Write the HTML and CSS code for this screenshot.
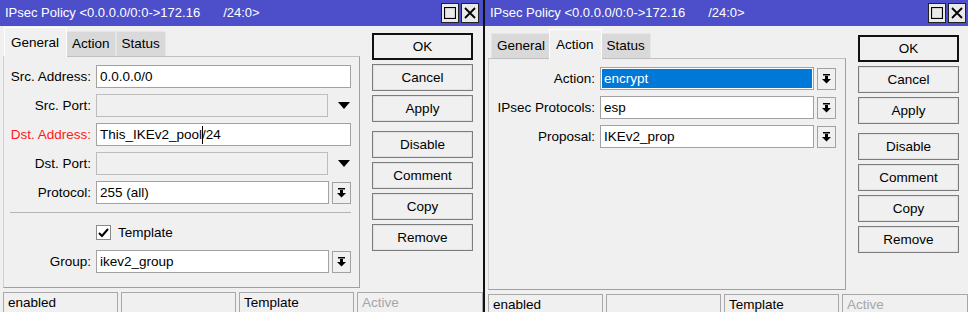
FILE: index.html
```html
<!DOCTYPE html>
<html lang="en">
<head>
  <meta charset="UTF-8" />
  <title>IPsec Policy</title>
  <link rel="stylesheet" href="styles.css">
</head>
<body>

  <div class="desk">

    <!-- window 1: General tab -->
    <div class="window">
      <div class="titlebar">
        <span class="title">IPsec Policy &lt;0.0.0.0/0:0-&gt;172.16<span class="gap"></span>/24:0&gt;</span>
        <div class="tbtns">
          <span class="tbtn"><svg width="12" height="12" viewBox="0 0 12 12"><rect x="0.5" y="0.5" width="11" height="11" fill="none" stroke="#000" stroke-width="1.2"/></svg></span>
          <span class="tbtn"><svg width="12" height="12" viewBox="0 0 12 12"><path d="M1 1 L11 11 M11 1 L1 11" stroke="#000" stroke-width="1.8"/></svg></span>
        </div>
      </div>
      <div class="wbody">
        <div class="main">
          <div class="tabs">
            <div class="tab active">General</div>
            <div class="tab">Action</div>
            <div class="tab">Status</div>
          </div>
          <div class="panel">
            <div class="row">
              <label>Src. Address:</label>
              <div class="field">0.0.0.0/0</div>
            </div>
            <div class="row">
              <label>Src. Port:</label>
              <div class="field off"></div>
              <span class="arrow"><svg width="12" height="7" viewBox="0 0 12 7"><path d="M0 0 H12 L6 7 Z" fill="#000"/></svg></span>
            </div>
            <div class="row">
              <label class="red">Dst. Address:</label>
              <div class="field">This_IKEv2_pool<span class="caret"></span>/24</div>
            </div>
            <div class="row">
              <label>Dst. Port:</label>
              <div class="field off"></div>
              <span class="arrow"><svg width="12" height="7" viewBox="0 0 12 7"><path d="M0 0 H12 L6 7 Z" fill="#000"/></svg></span>
            </div>
            <div class="row">
              <label>Protocol:</label>
              <div class="field">255 (all)</div>
              <span class="drop"><svg width="9" height="10" viewBox="0 0 9 10"><rect x="1" y="0" width="7" height="1.5" fill="#000"/><rect x="3" y="2" width="3" height="3" fill="#000"/><path d="M0 5 H9 L4.5 9.5 Z" fill="#000"/></svg></span>
            </div>
            <div class="sep"></div>
            <div class="row check-row">
              <label></label>
              <span class="check"><svg width="11" height="10" viewBox="0 0 11 10"><path d="M1 5 L4 8 L10 1" fill="none" stroke="#000" stroke-width="2"/></svg></span>
              <span class="check-text">Template</span>
            </div>
            <div class="row">
              <label>Group:</label>
              <div class="field">ikev2_group</div>
              <span class="drop"><svg width="9" height="10" viewBox="0 0 9 10"><rect x="1" y="0" width="7" height="1.5" fill="#000"/><rect x="3" y="2" width="3" height="3" fill="#000"/><path d="M0 5 H9 L4.5 9.5 Z" fill="#000"/></svg></span>
            </div>
          </div>
        </div>
        <div class="btns">
          <button class="default">OK</button>
          <button>Cancel</button>
          <button>Apply</button>
          <button class="spaced">Disable</button>
          <button>Comment</button>
          <button>Copy</button>
          <button>Remove</button>
        </div>
      </div>
      <div class="statusbar">
        <div class="cell">enabled</div>
        <div class="cell"></div>
        <div class="cell">Template</div>
        <div class="cell last dim">Active</div>
      </div>
    </div>

    <!-- window 2: Action tab -->
    <div class="window second">
      <div class="titlebar">
        <span class="title">IPsec Policy &lt;0.0.0.0/0:0-&gt;172.16<span class="gap"></span>/24:0&gt;</span>
        <div class="tbtns">
          <span class="tbtn"><svg width="12" height="12" viewBox="0 0 12 12"><rect x="0.5" y="0.5" width="11" height="11" fill="none" stroke="#000" stroke-width="1.2"/></svg></span>
          <span class="tbtn"><svg width="12" height="12" viewBox="0 0 12 12"><path d="M1 1 L11 11 M11 1 L1 11" stroke="#000" stroke-width="1.8"/></svg></span>
        </div>
      </div>
      <div class="wbody">
        <div class="main">
          <div class="tabs">
            <div class="tab">General</div>
            <div class="tab active">Action</div>
            <div class="tab">Status</div>
          </div>
          <div class="panel">
            <div class="row">
              <label>Action:</label>
              <div class="field selected">encrypt</div>
              <span class="drop"><svg width="9" height="10" viewBox="0 0 9 10"><rect x="1" y="0" width="7" height="1.5" fill="#000"/><rect x="3" y="2" width="3" height="3" fill="#000"/><path d="M0 5 H9 L4.5 9.5 Z" fill="#000"/></svg></span>
            </div>
            <div class="row">
              <label>IPsec Protocols:</label>
              <div class="field">esp</div>
              <span class="drop"><svg width="9" height="10" viewBox="0 0 9 10"><rect x="1" y="0" width="7" height="1.5" fill="#000"/><rect x="3" y="2" width="3" height="3" fill="#000"/><path d="M0 5 H9 L4.5 9.5 Z" fill="#000"/></svg></span>
            </div>
            <div class="row">
              <label>Proposal:</label>
              <div class="field">IKEv2_prop</div>
              <span class="drop"><svg width="9" height="10" viewBox="0 0 9 10"><rect x="1" y="0" width="7" height="1.5" fill="#000"/><rect x="3" y="2" width="3" height="3" fill="#000"/><path d="M0 5 H9 L4.5 9.5 Z" fill="#000"/></svg></span>
            </div>
          </div>
        </div>
        <div class="btns">
          <button class="default">OK</button>
          <button>Cancel</button>
          <button>Apply</button>
          <button class="spaced">Disable</button>
          <button>Comment</button>
          <button>Copy</button>
          <button>Remove</button>
        </div>
      </div>
      <div class="statusbar">
        <div class="cell">enabled</div>
        <div class="cell"></div>
        <div class="cell">Template</div>
        <div class="cell last dim">Active</div>
      </div>
    </div>

  </div>

</body>
</html>
```

FILE: styles.css
```css
body {
  margin: 0;
  padding: 0;
  background: #ffffff;
  font-family: 'Liberation Sans', Arial, sans-serif;
  font-size: 13.5px;
  color: #000;
}
.desk {
  display: flex;
  width: 968px;
  height: 312px;
  overflow: hidden;
}
.window {
  width: 483px;
  height: 312px;
  display: flex;
  flex-direction: column;
  background: #f0f0f0;
}
.window.second {
  width: 483px;
  border-left: 2px solid #111;
}
.titlebar {
  height: 26px;
  flex: none;
  background: #4c4fc9;
  display: flex;
  align-items: center;
  justify-content: space-between;
  padding-left: 5px;
}
.title {
  color: #fff;
  font-size: 13px;
  white-space: nowrap;
  padding-bottom: 2px;
}
.title .gap {
  display: inline-block;
  width: 23px;
}
.tbtns {
  display: flex;
  gap: 2px;
  margin-right: 4px;
  margin-bottom: 1px;
}
.second .tbtns {
  margin-right: 2px;
}
.tbtn {
  width: 16px;
  height: 18px;
  border: 1px solid #222;
  background: #e9e9e9;
  display: flex;
  align-items: center;
  justify-content: center;
}
.wbody {
  height: 265px;
  flex: none;
  display: flex;
  padding: 0 3px;
}
.second .wbody {
  height: 267px;
  padding-top: 2px;
  box-sizing: border-box;
}
.main {
  width: 357px;
  padding-top: 2px;
  display: flex;
  flex-direction: column;
}
.second .main {
  width: 358px;
}
.tabs {
  height: 28px;
  display: flex;
  align-items: flex-end;
  padding-left: 3px;
}
.tab {
  height: 24px;
  line-height: 24px;
  padding: 0 5px;
  background: #d9d9d9;
  border: 1px solid #e6e6e6;
  border-bottom: none;
}
.tab.active {
  height: 29px;
  line-height: 29px;
  margin: 0 -1px -1px -2px;
  padding: 0 7px 0 6px;
  background: #f0f0f0;
  border-color: #fdfdfd;
  position: relative;
  z-index: 1;
}
.panel {
  height: 232px;
  box-sizing: border-box;
  border: 1px solid #a0a0a0;
  border-top-color: #c0c0c0;
  border-left-color: #d0d0d0;
  padding: 8px 8px 0 0;
  display: flex;
  flex-direction: column;
  gap: 6px;
}
.second .panel {
  padding-right: 9px;
}
.row {
  display: flex;
  align-items: center;
  height: 23px;
}
.row label {
  width: 87px;
  margin-right: 5px;
  text-align: right;
  flex: none;
  white-space: nowrap;
}
.second .row label {
  width: 106px;
}
.row label.red {
  color: #ff1a1a;
}
.field {
  flex: 1;
  height: 23px;
  box-sizing: border-box;
  border: 1px solid #a2a2a2;
  background: #fff;
  padding: 0 3px;
  line-height: 21px;
  white-space: nowrap;
}
.field.off {
  background: #f0f0f0;
  border-color: #bdbdbd;
}
.field.selected {
  background: #0078d7;
  color: #fff;
  box-shadow: inset 0 0 0 1px #fff;
}
.caret {
  display: inline-block;
  width: 0;
  height: 18px;
  border-left: 1px solid #000;
  vertical-align: -5px;
  margin-right: -1px;
}
.arrow {
  width: 23px;
  display: flex;
  justify-content: flex-end;
  padding-right: 1px;
  box-sizing: border-box;
}
.drop {
  width: 19px;
  height: 22px;
  margin-left: 3px;
  box-sizing: border-box;
  border: 1px solid #a2a2a2;
  background: #f0f0f0;
  display: flex;
  align-items: center;
  justify-content: center;
}
.sep {
  height: 1px;
  background: #b4b4b4;
  margin: 2px 0 0 6px;
}
.check-row {
  margin-top: 2px;
}
.check {
  width: 15px;
  height: 15px;
  box-sizing: border-box;
  border: 1px solid #8a8a8a;
  background: #fff;
  display: flex;
  align-items: center;
  justify-content: center;
}
.check-text {
  margin-left: 7px;
}
.btns {
  width: 101px;
  margin-left: 12px;
  padding-top: 7px;
  display: flex;
  flex-direction: column;
  gap: 4px;
}
button {
  height: 27px;
  font-family: inherit;
  font-size: 13.5px;
  color: #000;
  background: #f0f0f0;
  border: 1px solid #7c7c7c;
  box-shadow: inset 0 0 0 1px #e2e2e2;
  padding: 0;
}
button.default {
  border: 2px solid #111;
  box-shadow: none;
}
button.spaced {
  margin-top: 5px;
}
.statusbar {
  flex: 1;
  display: flex;
  gap: 3px;
  padding: 1px 0 0 3px;
  overflow: hidden;
}
.cell {
  width: 115px;
  height: 20px;
  flex: none;
  box-sizing: border-box;
  border: 1px solid #a8a8a8;
  border-bottom: none;
  padding: 2px 0 0 4px;
  line-height: 16px;
}
.cell.last {
  flex: 1;
  width: auto;
}
.cell.dim {
  color: #a6a6a6;
}
```
